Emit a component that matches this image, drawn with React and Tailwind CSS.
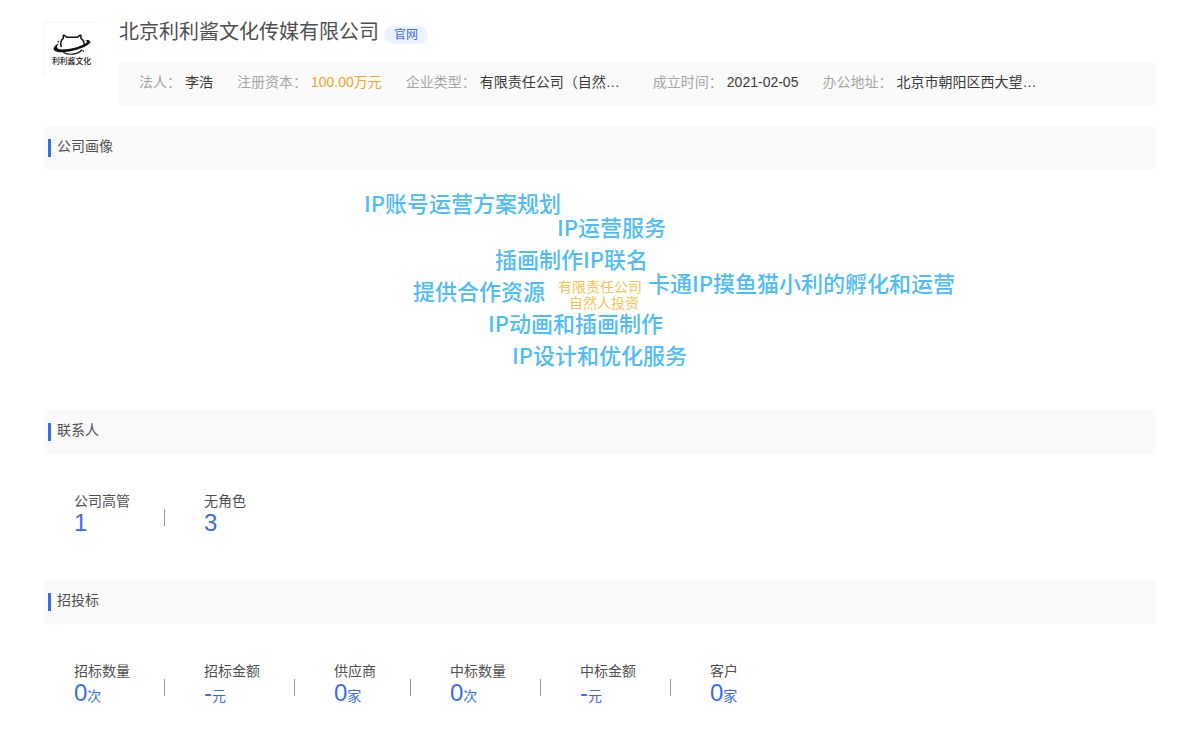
import clsx from "clsx";

const companyInfo = [
  { label: "法人：", value: "李浩" },
  { label: "注册资本：", value: "100.00万元", highlight: true },
  { label: "企业类型：", value: "有限责任公司（自然…", wide: true },
  { label: "成立时间：", value: "2021-02-05" },
  { label: "办公地址：", value: "北京市朝阳区西大望…", wide: true },
];

// Each tag carries its own spot on the cloud canvas
const tags = [
  { text: "IP账号运营方案规划", className: "left-[64px] top-[16px]" },
  { text: "IP运营服务", className: "left-[257px] top-[40px]" },
  { text: "插画制作IP联名", className: "left-[195px] top-[72px]" },
  { text: "卡通IP摸鱼猫小利的孵化和运营", className: "left-[348px] top-[96px]" },
  { text: "提供合作资源", className: "left-[113px] top-[104px]" },
  { text: "有限责任公司", className: "left-[258px] top-[108px]", small: true },
  { text: "自然人投资", className: "left-[269px] top-[124px]", small: true },
  { text: "IP动画和插画制作", className: "left-[188px] top-[136px]" },
  { text: "IP设计和优化服务", className: "left-[212px] top-[168px]" },
];

const contacts = [
  { label: "公司高管", value: "1" },
  { label: "无角色", value: "3" },
];

const bids = [
  { label: "招标数量", value: "0", unit: "次" },
  { label: "招标金额", value: "-", unit: "元" },
  { label: "供应商", value: "0", unit: "家" },
  { label: "中标数量", value: "0", unit: "次" },
  { label: "中标金额", value: "-", unit: "元" },
  { label: "客户", value: "0", unit: "家" },
];

const CompanyLogo = () => (
  <div className="w-[54px] h-[54px] shrink-0 border-l border-t border-gray-100">
    <svg viewBox="0 0 54 54" className="w-full h-full" role="img" aria-label="利利酱文化">
      <g fill="none" stroke="#111" strokeLinecap="round" strokeLinejoin="round">
        <path
          d="M16.500 24c-1.200-4 0-6.800 2.300-8.500l-.3-2.300c0-.7.6-.9 1.200-.5l2.600 1.900h10.600l2.600-2c.6-.4 1.200-.2 1.200.5l-.2 2.400c2.600 1.900 3.800 4.500 3.400 7.500"
          strokeWidth="1.500"
        />
        <path d="M19 30c4.500 2.800 14 2.600 18.500-2.500" strokeWidth="1.200" />
      </g>
      <path
        d="M14.500 20.500c-5.200 2.500-7.400 6.200-4.400 8 6.400 3.600 27.900-1.200 34.400-6.800 3.400-3 1.700-5-4.500-4.400 3.300.5 3.800 1.800 1.200 3.500-6.600 4.200-21.300 7.200-27.200 5.700-2.700-.9-2.100-3.200.5-6z"
        fill="#111"
      />
      <circle cx="13.500" cy="19" r="0.800" fill="#111" />
      <circle cx="39" cy="28.500" r="0.800" fill="#111" />
      <text x="27" y="42" fontSize="8" textAnchor="middle" fill="#222" className="font-medium">
        利利酱文化
      </text>
    </svg>
  </div>
);

const SectionTitle = ({ children }) => (
  <div className="h-11 flex bg-[#fafafa] pl-1">
    <span className="w-[3px] h-[18px] mt-[13px] mr-1.5 bg-[#3370e8]" />
    <h2 className="text-sm leading-10">{children}</h2>
  </div>
);

const StatList = ({ items }) => (
  <dl className="flex pl-[30px] pt-9">
    {items.map((item, idx) => (
      <div key={item.label} className="flex">
        {idx > 0 && <span className="w-px h-[17px] mt-[19px] ml-[34px] mr-[39px] bg-[#999]" />}
        <div>
          <dt className="text-sm leading-[22px]">{item.label}</dt>
          <dd className="text-[#3b6cec] text-2xl leading-[22px]">
            {item.value}
            {item.unit && <span className="text-sm leading-[22px]">{item.unit}</span>}
          </dd>
        </div>
      </div>
    ))}
  </dl>
);

const App = () => {
  return (
    <main
      lang="zh-CN"
      className="min-h-screen bg-white px-11 pt-[22px] text-[#505050] font-['Liberation_Sans','Noto_Sans_CJK_SC',sans-serif]"
    >
      {/* Company header */}
      <header className="flex gap-[21px]">
        <CompanyLogo />
        <div className="flex-1 min-w-0">
          <div className="flex items-start gap-[5px] h-10">
            <h1 className="text-xl leading-5">北京利利酱文化传媒有限公司</h1>
            <a
              href="#website"
              className="mt-1 px-2.5 rounded-full bg-[#edf3fe] text-[#3b6cec] text-xs leading-[18px]"
            >
              官网
            </a>
          </div>
          <dl className="flex gap-6 h-11 px-5 bg-[#fafafa] text-sm leading-10">
            {companyInfo.map((info) => (
              <div key={info.label} className="flex gap-1 whitespace-nowrap">
                <dt className="text-[#a6a6a6]">{info.label}</dt>
                <dd
                  className={clsx(
                    info.wide && "w-[149px]",
                    info.highlight ? "text-[#f0a52e]" : "text-[#3a3a3a]"
                  )}
                >
                  {info.value}
                </dd>
              </div>
            ))}
          </dl>
        </div>
      </header>

      {/* Company profile */}
      <section className="mt-5 h-[284px]">
        <SectionTitle>公司画像</SectionTitle>
        <div className="relative w-[600px] h-[220px] mx-auto font-['Noto_Sans_CJK_SC',sans-serif]">
          {tags.map((tag) => (
            <span
              key={tag.text}
              className={clsx(
                "absolute whitespace-nowrap",
                tag.small
                  ? "text-sm leading-4 text-[#f8c350]"
                  : "text-[22px] leading-8 font-medium text-[#4fbdf5]",
                tag.className
              )}
            >
              {tag.text}
            </span>
          ))}
        </div>
      </section>

      {/* Contacts */}
      <section className="h-[170px]">
        <SectionTitle>联系人</SectionTitle>
        <StatList items={contacts} />
      </section>

      {/* Bidding */}
      <section>
        <SectionTitle>招投标</SectionTitle>
        <StatList items={bids} />
      </section>
    </main>
  );
};

export default App;
